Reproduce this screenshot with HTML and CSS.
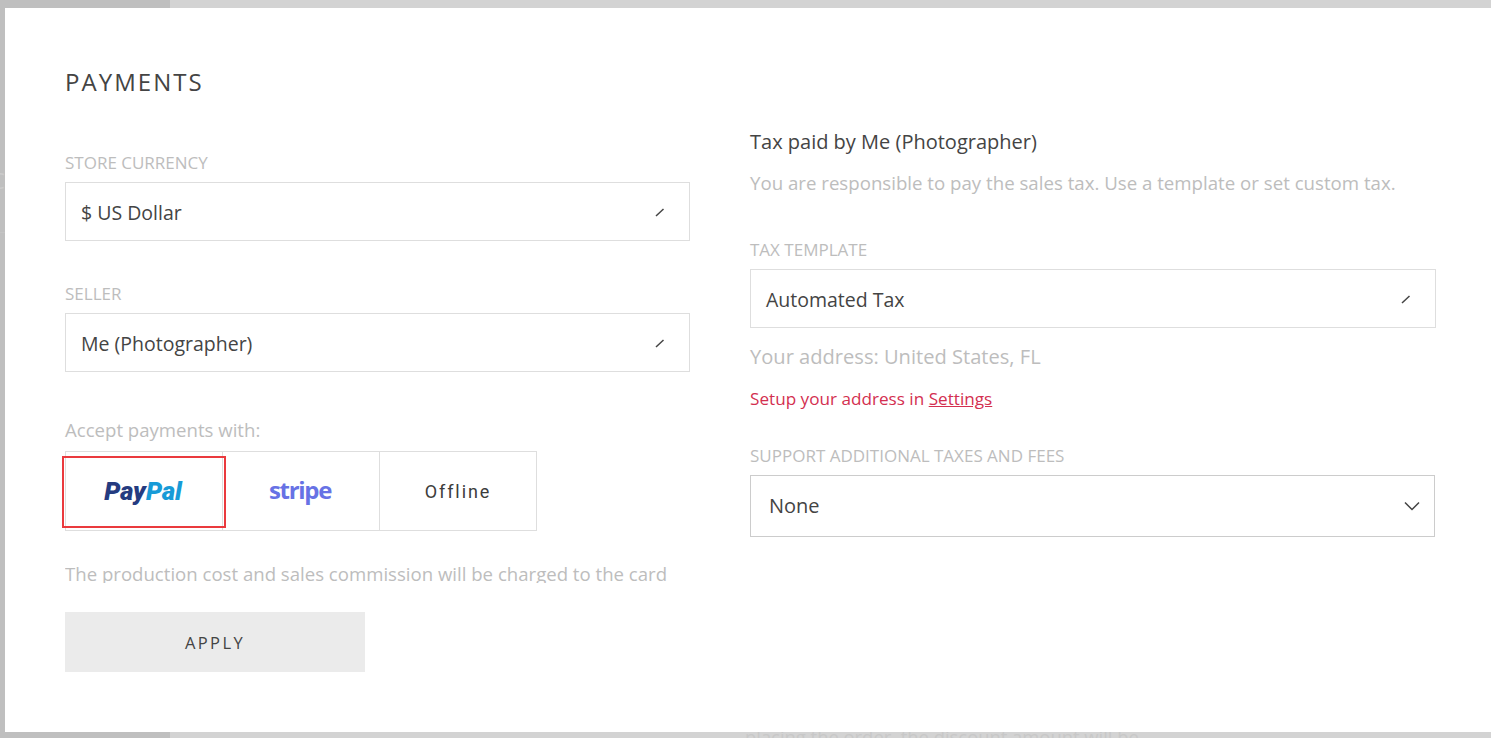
FILE: index.html
```html
<!DOCTYPE html>
<html lang="en">
<head>
<meta charset="utf-8">
<title>Payments</title>
<link rel="stylesheet" href="styles.css">
</head>
<body>
<div class="backdrop">
  <div class="back-side"><span class="ghost-c">C</span><span class="ghost-line"></span></div>
  <div class="back-main"><span class="ghost-text">placing the order, the discount amount will be</span></div>
</div>
<main class="modal">
  <section class="col col-left">
    <h1 class="title">PAYMENTS</h1>
    <label class="label label-first">STORE CURRENCY</label>
    <div class="select"><span class="value">$ US Dollar</span>
      <svg class="tick" width="10" height="10" viewBox="0 0 10 10"><path d="M1 9 L8.500 2" stroke="#444" stroke-width="1.500" fill="none"/></svg>
    </div>
    <label class="label label-seller">SELLER</label>
    <div class="select"><span class="value">Me (Photographer)</span>
      <svg class="tick" width="10" height="10" viewBox="0 0 10 10"><path d="M1 9 L8.500 2" stroke="#444" stroke-width="1.500" fill="none"/></svg>
    </div>
    <p class="accept">Accept payments with:</p>
    <div class="providers">
      <div class="provider"><span class="paypal"><span class="pay">Pay</span><span class="pal">Pal</span></span></div>
      <div class="provider"><span class="stripe">stripe</span></div>
      <div class="provider"><span class="offline">Offline</span></div>
      <div class="highlight"></div>
    </div>
    <div class="note-clip"><p class="note">The production cost and sales commission will be charged to the card</p></div>
    <button class="apply">APPLY</button>
  </section>
  <section class="col col-right">
    <h2 class="tax-head">Tax paid by Me (Photographer)</h2>
    <p class="tax-desc">You are responsible to pay the sales tax. Use a template or set custom tax.</p>
    <label class="label label-template">TAX TEMPLATE</label>
    <div class="select"><span class="value">Automated Tax</span>
      <svg class="tick" width="10" height="10" viewBox="0 0 10 10"><path d="M1 9 L8.500 2" stroke="#444" stroke-width="1.500" fill="none"/></svg>
    </div>
    <p class="address">Your address: United States, FL</p>
    <p class="setup">Setup your address in <a class="setup-link" href="#">Settings</a></p>
    <label class="label label-support">SUPPORT ADDITIONAL TAXES AND FEES</label>
    <div class="select select-none"><span>None</span>
      <svg class="chev" width="16" height="10" viewBox="0 0 16 10"><path d="M1 1.500 L8 8.500 L15 1.500" stroke="#444" stroke-width="1.500" fill="none"/></svg>
    </div>
  </section>
</main>
</body>
</html>
```
FILE: styles.css
```css
* { box-sizing: border-box; }
html, body { margin: 0; height: 100%; overflow: hidden; }
body {
  position: relative;
  width: 1491px;
  height: 738px;
  font-family: "Open Sans", sans-serif;
  color: #444;
  background: #d3d3d3;
}
.backdrop { position: absolute; inset: 0; display: flex; }
.back-side { width: 170px; background: #bfbfbf; position: relative; overflow: hidden; }
.back-main { flex: 1; background: #d3d3d3; position: relative; overflow: hidden; }
.ghost-c { position: absolute; left: -9px; top: 165px; font-size: 22px; color: #cbcbcb; }
.ghost-line { position: absolute; left: 0; top: 232px; width: 100%; height: 1px; background: #c4c4c4; }
.ghost-text { position: absolute; left: 575px; top: 724px; font-size: 18.400px; color: #c8c8c8; white-space: nowrap; }

.modal {
  position: absolute;
  left: 5px;
  top: 8px;
  right: 0;
  bottom: 6px;
  background: #fff;
  display: flex;
  padding-left: 60px;
}
.col { display: flex; flex-direction: column; align-items: flex-start; }
.col-left { width: 625px; margin-right: 60px; }
.col-right { width: 686px; padding-top: 119px; }

.title {
  margin: 59px 0 0;
  font-size: 24px;
  line-height: 30px;
  font-weight: 400;
  letter-spacing: 2.050px;
  color: #444;
}
.label { display: block; font-size: 17px; line-height: 22px; color: #bdbdbd; }
.label-first { margin-top: 55px; margin-bottom: 8px; }
.label-seller { margin-top: 42px; margin-bottom: 8px; }
.label-template { margin-top: 44px; margin-bottom: 8px; }
.label-support { margin-top: 34px; margin-bottom: 8px; }

.select {
  width: 100%;
  height: 59px;
  border: 1px solid #dedede;
  display: flex;
  align-items: center;
  justify-content: space-between;
  padding: 0 24px 0 15px;
  font-size: 19.500px;
  color: #444;
  background: #fff;
}
.value { position: relative; top: 1px; }
.tick { flex: none; }
.select-none {
  width: 685px;
  height: 62px;
  border-color: #ccc;
  padding: 0 14px 0 18px;
  font-size: 20px;
}
.select-none span { position: relative; top: -1px; }
.accept { margin: 46px 0 0; font-size: 18.600px; line-height: 24px; color: #bdbdbd; }
.providers { position: relative; display: flex; margin-top: 9px; }
.provider {
  width: 158px;
  height: 80px;
  border: 1px solid #dedede;
  margin-right: -1px;
  display: flex;
  align-items: center;
  justify-content: center;
}
.provider:last-of-type { margin-right: 0; }
.highlight {
  position: absolute;
  left: -3px;
  top: 5px;
  width: 164px;
  height: 72px;
  border: 2px solid #ea3a3e;
}
.paypal { font-family: "Roboto", sans-serif; font-size: 25.500px; font-weight: 900; font-style: italic; letter-spacing: 0; position: relative; left: -1px; }
.pay { color: #253b80; }
.pal { color: #179bd7; }
.stripe { font-family: "Open Sans", sans-serif; font-size: 24px; font-weight: 700; letter-spacing: -1.300px; color: #6772e5; position: relative; top: -2px; left: -1px; }
.offline { font-family: "Roboto", sans-serif; font-size: 18px; font-weight: 400; letter-spacing: 1.900px; color: #3c3c3c; }
.note-clip { height: 21px; margin-top: 31px; overflow: hidden; }
.note { margin: 0; font-size: 18.600px; line-height: 24px; color: #bdbdbd; white-space: nowrap; }
.apply {
  width: 300px;
  height: 60px;
  margin-top: 29px;
  border: 0;
  background: #ebebeb;
  font-family: "Open Sans", sans-serif;
  font-size: 16.500px;
  letter-spacing: 2.400px;
  color: #444;
}

.tax-head { margin: 0; font-size: 20px; line-height: 30px; font-weight: 400; color: #444; }
.tax-desc { margin: 14px 0 0; font-size: 18.670px; line-height: 24px; color: #bdbdbd; }
.address { margin: 16px 0 0; font-size: 20.100px; line-height: 26px; color: #bdbdbd; }
.setup { margin: 17px 0 0; font-size: 17.150px; line-height: 24px; color: #d32f50; }
.setup-link { color: #d32f50; text-decoration: underline; }
```
